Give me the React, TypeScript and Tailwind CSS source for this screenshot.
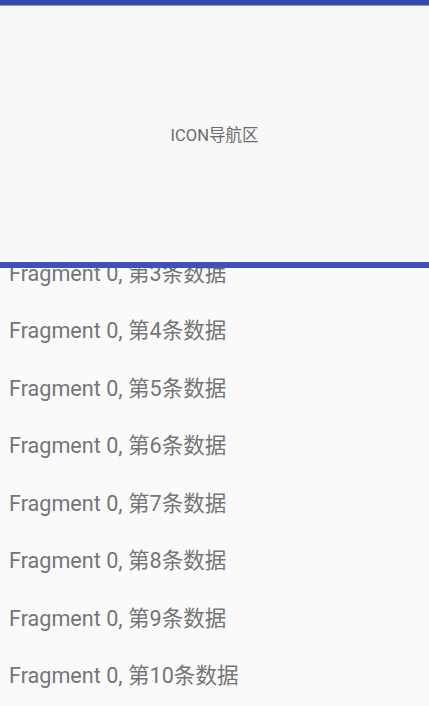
export default function App() {
  const rows = [3, 4, 5, 6, 7, 8, 9, 10, 11];
  return (
    <div className="w-[429px] h-[706px] overflow-hidden bg-[#fafafa] flex flex-col" style={{ fontFamily: 'Roboto, "Noto Sans CJK SC", sans-serif' }}>
      <div className="h-[5px] bg-[#3949ab] shrink-0" />
      <div className="h-px bg-[#8c96d0] shrink-0" />
      <div className="h-[256px] shrink-0 bg-[#f8f8f8] flex items-center justify-center">
        <span className="text-[16.5px] text-[#6b6b6b] mt-[4px]">ICON导航区</span>
      </div>
      <div className="h-[6px] bg-[#3f51b5] shrink-0" />
      <div className="flex-1 overflow-hidden">
        <div className="-mt-[22.75px] flex flex-col">
          {rows.map((n) => (
            <div key={n} className="h-[57.5px] flex items-center pl-[9px] text-[21.6px] text-[#757575] shrink-0">
              Fragment 0, 第{n}条数据
            </div>
          ))}
        </div>
      </div>
    </div>
  );
}
